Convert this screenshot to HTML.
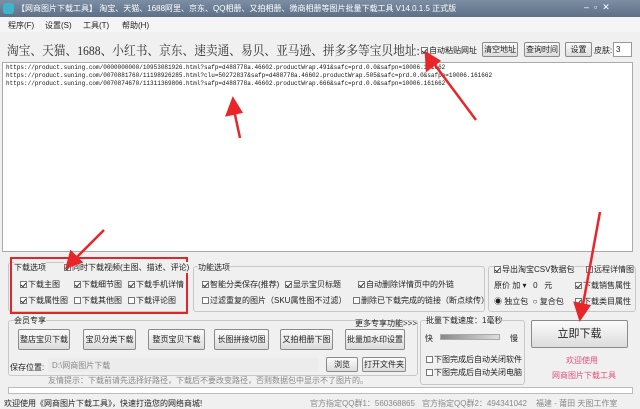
<!DOCTYPE html><html><head><meta charset="utf-8"><style>
*{margin:0;padding:0;box-sizing:border-box}
body{width:640px;height:408px;overflow:hidden;background:#f0f0f0;font-family:"Liberation Sans","Noto Sans CJK SC",sans-serif;font-size:8px;color:#222;position:relative}
.a{position:absolute;white-space:nowrap}
.btn{position:absolute;border:1px solid #8a8a8a;border-radius:2px;background:linear-gradient(#fbfbfb,#dcdcdc);text-align:center;font-size:8px}
.grp{position:absolute;border:1px solid #c8c8c8;border-radius:3px}
.cb{display:inline-block;width:7px;height:7px;border:1px solid #777;background:#fff;vertical-align:-1px;margin-right:1px;position:relative}
.cb.k:after{content:"";position:absolute;left:1px;top:0;width:2px;height:4px;border:solid #333;border-width:0 1px 1px 0;transform:rotate(40deg)}
.u{font-family:"Liberation Mono",monospace;font-size:6px;color:#111;line-height:8px}
</style></head><body>
<div class="a" style="left:0;top:0;width:640px;height:17px;background:linear-gradient(#7d8ea3,#5d7088)"></div>
<div class="a" style="left:3px;top:3px;width:11px;height:11px;border-radius:3px;background:#3fb3c9"></div>
<div class="a" style="left:17px;top:3px;color:#fff;font-size:8px">【网商图片下载工具】 淘宝、天猫、1688阿里、京东、QQ相册、又拍相册、微商相册等图片批量下载工具 V14.0.1.5 正式版</div>
<div class="a" style="left:584px;top:2px;width:50px;height:11px;color:#fff;font-size:9px">‒ &nbsp;▫ &nbsp;✕</div>
<div class="a" style="left:0;top:17px;width:640px;height:15px;background:#f5f5f5"></div>
<div class="a" style="left:8px;top:20px">程序(F)</div><div class="a" style="left:45px;top:20px">设置(S)</div><div class="a" style="left:83px;top:20px">工具(T)</div><div class="a" style="left:122px;top:20px">帮助(H)</div>
<div class="a" style="left:7px;top:40px;font-size:13px;font-family:'Liberation Serif','Noto Serif CJK SC',serif;color:#333;transform:scaleX(0.9);transform-origin:0 0">淘宝、天猫、1688、小红书、京东、速卖通、易贝、亚马逊、拼多多等宝贝地址:</div>
<div class="a" style="left:421px;top:45px"><span class="cb k"></span>自动粘贴网址</div>
<div class="btn" style="left:482px;top:42px;width:36px;height:15px;line-height:13px">清空地址</div>
<div class="btn" style="left:524px;top:42px;width:36px;height:15px;line-height:13px">查询时间</div>
<div class="btn" style="left:565px;top:42px;width:27px;height:15px;line-height:13px">设置</div>
<div class="a" style="left:594px;top:45px">皮肤:</div>
<div class="a" style="left:613px;top:42px;width:19px;height:15px;background:#fff;border:1px solid #999;padding-left:2px;line-height:13px">3</div>
<div class="a" style="left:2px;top:62px;width:631px;height:190px;background:#fff;border:1px solid #aaa"></div>
<div class="a u" style="left:6px;top:64px">https://product.suning.com/0000000000/10953081926.html?safp=d488778a.46602.productWrap.491&amp;safc=prd.0.0&amp;safpn=10006.161662<br>https://product.suning.com/0070881760/11198926285.html?clu=50272837&amp;safp=d488778a.46602.productWrap.505&amp;safc=prd.0.0&amp;safpn=10006.161662<br>https://product.suning.com/0070874670/11311369806.html?safp=d488778a.46602.productWrap.666&amp;safc=prd.0.0&amp;safpn=10006.161662</div>
<div class="grp" style="left:8px;top:262px;width:180px;height:50px"></div>
<div class="a" style="left:10px;top:257px;width:178px;height:57px;border:2px solid #e0262a"></div>
<div class="a" style="left:14px;top:262px;background:#f0f0f0">下载选项</div>
<div class="a" style="left:64px;top:262px;background:#f0f0f0"><span class="cb k"></span>同时下载视频(主图、描述、评论)</div>
<div class="a" style="left:20px;top:279px"><span class="cb k"></span>下载主图</div>
<div class="a" style="left:74px;top:279px"><span class="cb k"></span>下载细节图</div>
<div class="a" style="left:128px;top:279px"><span class="cb k"></span>下载手机详情</div>
<div class="a" style="left:20px;top:295px"><span class="cb k"></span>下载属性图</div>
<div class="a" style="left:74px;top:295px"><span class="cb"></span>下载其他图</div>
<div class="a" style="left:128px;top:295px"><span class="cb"></span>下载评论图</div>
<div class="grp" style="left:193px;top:266px;width:292px;height:46px"></div>
<div class="a" style="left:198px;top:262px;background:#f0f0f0">功能选项</div>
<div class="a" style="left:202px;top:279px"><span class="cb k"></span>智能分类保存(推荐)</div>
<div class="a" style="left:285px;top:279px"><span class="cb k"></span>显示宝贝标题</div>
<div class="a" style="left:358px;top:279px"><span class="cb k"></span>自动删除详情页中的外链</div>
<div class="a" style="left:202px;top:295px"><span class="cb"></span>过滤重复的图片（SKU属性图不过滤）</div>
<div class="a" style="left:353px;top:295px"><span class="cb"></span>删除已下载完成的链接（断点续传）</div>
<div class="grp" style="left:488px;top:266px;width:148px;height:46px"></div>
<div class="a" style="left:494px;top:264px;background:#f0f0f0"><span class="cb k"></span>导出淘宝CSV数据包</div>
<div class="a" style="left:586px;top:264px;background:#f0f0f0"><span class="cb"></span>远程详情图</div>
<div class="a" style="left:494px;top:280px">原价 加 ▾ &nbsp;&nbsp;0&nbsp;&nbsp; 元</div>
<div class="a" style="left:575px;top:280px"><span class="cb k"></span>下载销售属性</div>
<div class="a" style="left:494px;top:296px">◉ 独立包 &nbsp;○ 复合包</div>
<div class="a" style="left:575px;top:296px"><span class="cb k"></span>下载类目属性</div>
<div class="grp" style="left:8px;top:320px;width:410px;height:56px"></div>
<div class="a" style="left:14px;top:315px;background:#f0f0f0">会员专享</div>
<div class="a" style="left:355px;top:318px">更多专享功能&gt;&gt;&gt;</div>
<div class="btn" style="left:18px;top:329px;width:52px;height:21px;line-height:19px">整店宝贝下载</div>
<div class="btn" style="left:83px;top:329px;width:53px;height:21px;line-height:19px">宝贝分类下载</div>
<div class="btn" style="left:148px;top:329px;width:57px;height:21px;line-height:19px">整页宝贝下载</div>
<div class="btn" style="left:214px;top:329px;width:55px;height:21px;line-height:19px">长图拼接切图</div>
<div class="btn" style="left:280px;top:329px;width:53px;height:21px;line-height:19px">又拍相册下图</div>
<div class="btn" style="left:345px;top:329px;width:60px;height:21px;line-height:19px">批量加水印设置</div>
<div class="a" style="left:10px;top:362px">保存位置:</div>
<div class="a" style="left:48px;top:358px;width:270px;height:14px;background:#ececec;color:#888;padding:2px 4px">D:\网商图片下载</div>
<div class="btn" style="left:326px;top:357px;width:32px;height:15px;line-height:13px">浏览</div>
<div class="btn" style="left:362px;top:357px;width:44px;height:15px;line-height:13px">打开文件夹</div>
<div class="a" style="left:48px;top:375px;color:#888">友情提示：下载前请先选择好路径，下载后不要改变路径，否则数据包中显示不了图片的。</div>
<div class="grp" style="left:420px;top:320px;width:105px;height:65px"></div>
<div class="a" style="left:426px;top:315px;background:#f0f0f0">批量下载速度：1毫秒</div>
<div class="a" style="left:425px;top:333px">快</div>
<div class="a" style="left:440px;top:334px;width:60px;height:6px;background:linear-gradient(90deg,#888,#ddd);border:1px solid #aaa"></div>
<div class="a" style="left:510px;top:333px">慢</div>
<div class="a" style="left:426px;top:354px"><span class="cb"></span>下图完成后自动关闭软件</div>
<div class="a" style="left:426px;top:367px"><span class="cb"></span>下图完成后自动关闭电脑</div>
<div class="btn" style="left:531px;top:320px;width:97px;height:28px;line-height:26px;font-size:11px">立即下载</div>
<div class="a" style="left:566px;top:355px;color:#e0507a">欢迎使用</div>
<div class="a" style="left:552px;top:370px;color:#e0507a">网商图片下载工具</div>
<div class="a" style="left:8px;top:387px;width:625px;height:7px;background:#fff;border:1px solid #bbb"></div>
<div class="a" style="left:4px;top:398px">欢迎使用《网商图片下载工具》，快速打造您的网络商城!</div>
<div class="a" style="left:310px;top:398px;color:#888">官方指定QQ群1：560368865</div>
<div class="a" style="left:422px;top:398px;color:#888">官方指定QQ群2：494341042</div>
<div class="a" style="left:536px;top:398px;color:#888">福建 - 莆田 天图工作室</div>
<svg class="a" style="left:0;top:0" width="640" height="408">
<g stroke="#e8262a" stroke-width="2.5" fill="#e8262a">
<line x1="240" y1="138" x2="234" y2="110"/><polygon points="233,99 227,115 241,112"/>
<line x1="476" y1="120" x2="432" y2="61"/><polygon points="426,53 427,70 439,61"/>
<line x1="600" y1="212" x2="582" y2="310"/><polygon points="580,319 575,303 589,306"/>
<line x1="104" y1="230" x2="74" y2="260"/><polygon points="67,267 71,252 81,262"/>
</g></svg>
</body></html>
